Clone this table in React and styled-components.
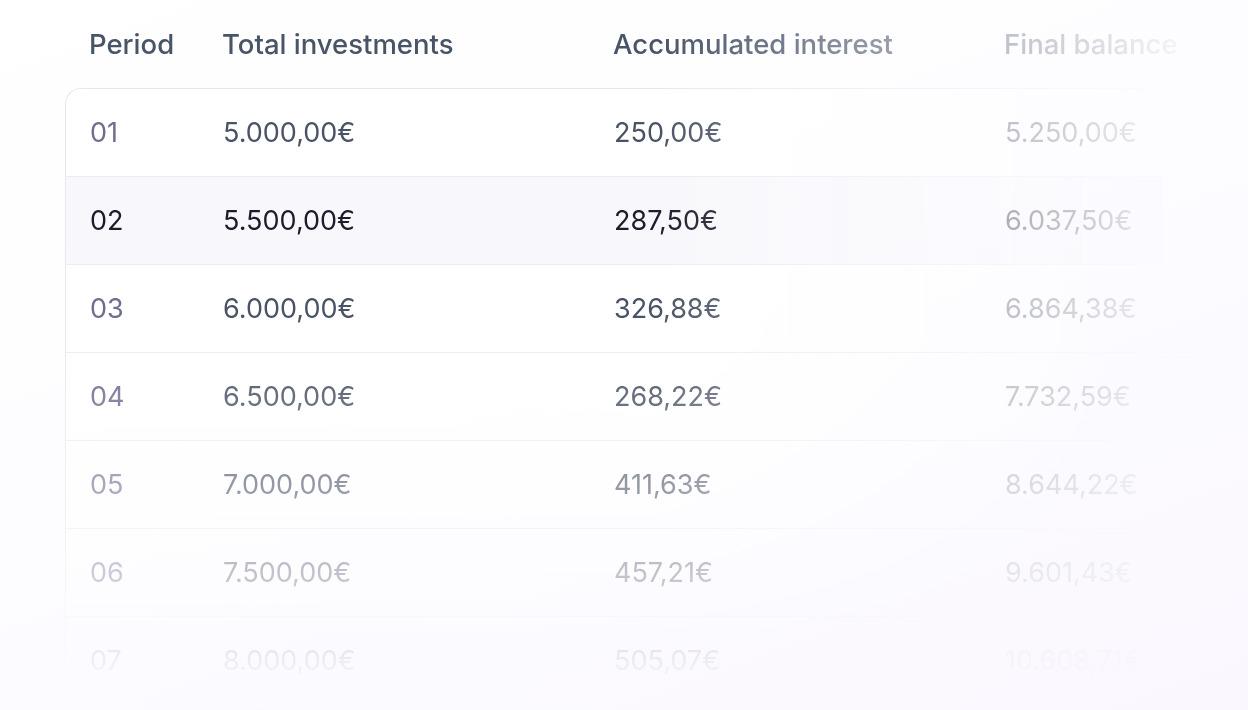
import React from "react";
import styled, { createGlobalStyle } from "styled-components";

const Global = createGlobalStyle`
  html, body { margin: 0; padding: 0; }
  body {
    width: 1248px;
    height: 710px;
    overflow: hidden;
    font-family: Inter, "Noto Sans", sans-serif;
    background: linear-gradient(160deg, #ffffff 0%, #fdfcff 45%, #faf8fe 100%);
  }
`;

const Page = styled.div`
  width: 1248px;
  height: 710px;
  overflow: hidden;
  padding-left: 65px;
  box-sizing: border-box;
`;

const FadeRight = styled.div`
  -webkit-mask-image: linear-gradient(90deg, #000 0px, #000 590px, rgba(0,0,0,0.35) 940px, rgba(0,0,0,0) 1140px);
  mask-image: linear-gradient(90deg, #000 0px, #000 590px, rgba(0,0,0,0.35) 940px, rgba(0,0,0,0) 1140px);
`;

const FadeBottom = styled.div`
  -webkit-mask-image: linear-gradient(180deg, #000 0px, #000 340px, rgba(0,0,0,0) 690px);
  mask-image: linear-gradient(180deg, #000 0px, #000 340px, rgba(0,0,0,0) 690px);
`;

const Grid = `
  display: grid;
  grid-template-columns: 133px 391px 391px 391px;
  padding-left: 24px;
  align-items: center;
`;

const HeaderRow = styled.div`
  ${Grid}
  height: 88px;
`;

const HeadCell = styled.div`
  font-size: 27.5px;
  font-weight: 500;
  color: #485468;
  white-space: nowrap;
`;

const Card = styled.div`
  background: #ffffff;
  border: 1px solid #e7e7ee;
  border-right: none;
  border-top-left-radius: 16px;
  width: 1400px;
`;

const Row = styled.div`
  ${Grid}
  height: 87px;
  background: ${(p) => (p.$active ? "#f8f8fc" : "transparent")};
  & + & { border-top: 1px solid #ebebf1; }
`;

const Cell = styled.div`
  font-size: 27px;
  font-weight: 400;
  white-space: nowrap;
  color: ${(p) =>
    p.$active ? "#1c1c2b" : p.$period ? "#6f6d90" : "#4a5366"};
`;

const rows = [
  ["01", "5.000,00€", "250,00€", "5.250,00€"],
  ["02", "5.500,00€", "287,50€", "6.037,50€"],
  ["03", "6.000,00€", "326,88€", "6.864,38€"],
  ["04", "6.500,00€", "268,22€", "7.732,59€"],
  ["05", "7.000,00€", "411,63€", "8.644,22€"],
  ["06", "7.500,00€", "457,21€", "9.601,43€"],
  ["07", "8.000,00€", "505,07€", "10.608,71€"],
];

export default function App() {
  return (
    <>
      <Global />
      <Page>
        <FadeRight>
          <FadeBottom>
            <HeaderRow>
              <HeadCell>Period</HeadCell>
              <HeadCell>Total investments</HeadCell>
              <HeadCell>Accumulated interest</HeadCell>
              <HeadCell>Final balance</HeadCell>
            </HeaderRow>
            <Card>
              {rows.map((r, i) => {
                const active = i === 1;
                return (
                  <Row key={r[0]} $active={active}>
                    <Cell $period $active={active}>{r[0]}</Cell>
                    <Cell $active={active}>{r[1]}</Cell>
                    <Cell $active={active}>{r[2]}</Cell>
                    <Cell $active={active}>{r[3]}</Cell>
                  </Row>
                );
              })}
            </Card>
          </FadeBottom>
        </FadeRight>
      </Page>
    </>
  );
}
